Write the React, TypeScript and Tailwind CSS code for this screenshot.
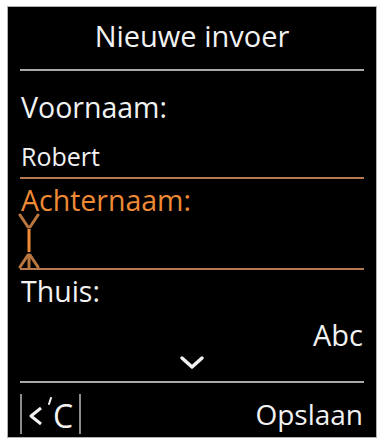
const ORANGE = 'text-[#ee8a36]';

function TextCursor() {
  return (
    <svg width="40" height="58" viewBox="0 0 40 58" className="block -ml-[8px]">
      <g stroke="#b9763f" strokeWidth="3" strokeLinecap="round" fill="none">
        <path d="M8 2 L16 14" />
        <path d="M26 2 L18 14" />
        <path d="M16 42 L8 54" />
        <path d="M18 42 L26 54" />
        <path d="M17 42 L17 55" />
      </g>
      <path d="M17 16 L17 39" stroke="#f08c38" strokeWidth="3" />
    </svg>
  );
}

function ClearKey() {
  return (
    <div className="flex items-center h-[42px]">
      <div className="w-[2px] h-[40px] bg-[#8c8c8c]" />
      <svg width="18" height="24" viewBox="0 0 18 24" className="ml-[5px] mt-[5px]">
        <path d="M14 4 L4 12 L14 20" stroke="#f2f2f2" strokeWidth="3" fill="none" strokeLinejoin="round" />
      </svg>
      <svg width="6" height="30" viewBox="0 0 6 30" className="ml-[2px] self-start mt-[4px]">
        <path d="M4 1 L2 7" stroke="#f2f2f2" strokeWidth="2" strokeLinecap="round" />
      </svg>
      <div className="text-[32px] leading-none text-[#f2f2f2] mt-[4px]">C</div>
      <div className="w-[2px] h-[40px] bg-[#8c8c8c] ml-[6px]" />
    </div>
  );
}

export default function App() {
  return (
    <div className="w-[379px] h-[440px] bg-white overflow-hidden font-['Open_Sans',sans-serif]">
      <div className="ml-[8px] mt-[7px] w-[368px] h-[430px] bg-black outline outline-1 outline-[#b0b0b0] px-[12px] text-[#f2f2f2]">
        {/* header */}
        <div className="pt-[14px] text-center text-[29px] leading-none">Nieuwe invoer</div>
        <div className="mt-[19px] h-[2px] bg-[#a8a8a8]" />

        {/* first name */}
        <div className="mt-[22px] text-[28.5px] leading-none pl-[1px]">Voornaam:</div>
        <div className="mt-[22px] text-[25px] leading-none pl-[1px]">Robert</div>
        <div className="mt-[8px] h-[2px] bg-[#b87a52]" />

        {/* last name (active) */}
        <div className={`mt-[7px] text-[28.5px] leading-none pl-[1px] ${ORANGE}`}>Achternaam:</div>
        <div className="-mt-[1px]">
          <TextCursor />
        </div>
        <div className="-mt-[3px] h-[2px] bg-[#b87a52]" />

        {/* home number */}
        <div className="mt-[7px] text-[28.5px] leading-none pl-[1px]">Thuis:</div>
        <div className="mt-[14px] text-[29px] leading-none text-right pr-[1px]">Abc</div>
        <div className="mt-[6px] flex justify-center">
          <svg width="26" height="15" viewBox="0 0 26 15">
            <path d="M3 3 L13 12 L23 3" stroke="#f2f2f2" strokeWidth="3.5" fill="none" strokeLinecap="round" strokeLinejoin="round" />
          </svg>
        </div>
        <div className="mt-[11px] h-[2px] bg-[#a8a8a8]" />

        {/* soft keys */}
        <div className="mt-[10px] flex items-center justify-between">
          <ClearKey />
          <div className="text-[28px] leading-none pr-[1px]">Opslaan</div>
        </div>
      </div>
    </div>
  );
}
